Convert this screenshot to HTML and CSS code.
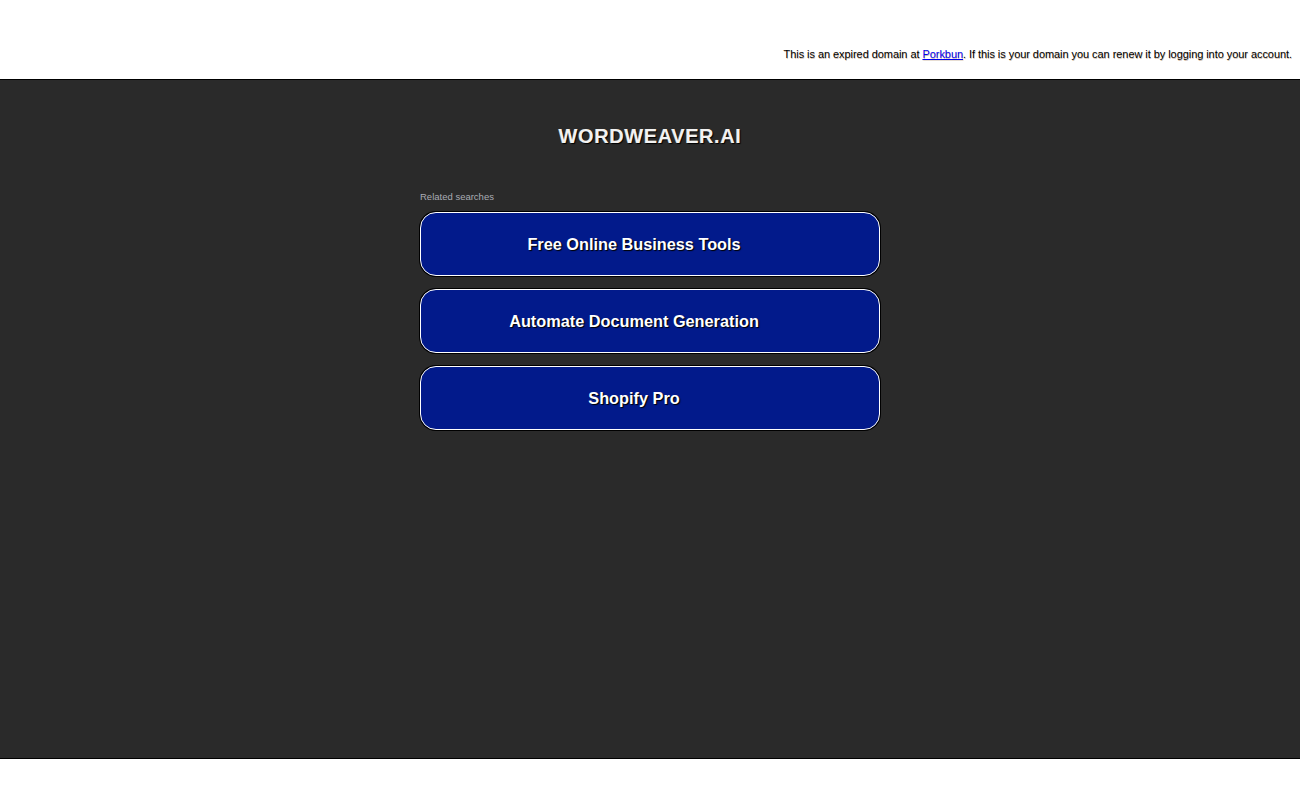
FILE: index.html
```html
<!DOCTYPE html>
<html>
<head>
<meta charset="utf-8">
<link rel="stylesheet" href="styles.css">
</head>
<body>
<div class="topbar">
  <p class="notice">This is an expired domain at <a href="#">Porkbun</a>. If this is your domain you can renew it by logging into your account.</p>
</div>
<div class="main">
  <h1 class="title">WORDWEAVER.AI</h1>
  <div class="searches">
    <p class="label">Related searches</p>
    <a class="btn" href="#">Free Online Business Tools</a>
    <a class="btn" href="#">Automate Document Generation</a>
    <a class="btn" href="#">Shopify Pro</a>
  </div>
</div>
</body>
</html>
```
FILE: styles.css
```css
html, body {
  margin: 0;
  padding: 0;
  background: #fff;
  font-family: "Liberation Sans", Arial, sans-serif;
}
.topbar {
  height: 79px;
  display: flex;
  align-items: flex-end;
  justify-content: flex-end;
  padding: 0 8px;
  box-sizing: border-box;
}
.notice {
  margin: 0 0 18px 0;
  font-size: 11px;
  letter-spacing: -0.06px;
  line-height: 13px;
  color: #000;
  text-shadow: 0.5px 0.5px 0 rgba(120, 60, 0, 0.35);
}
.notice a {
  color: #0000ee;
  text-decoration: underline;
}
.main {
  background: #2a2a2a;
  border-top: 1px solid #000;
  border-bottom: 1px solid #000;
  height: 680px;
  box-sizing: border-box;
  display: flex;
  flex-direction: column;
  align-items: center;
}
.title {
  margin: 44px 0 0 0;
  font-size: 20px;
  font-weight: bold;
  letter-spacing: 0.6px;
  color: #f2f2f2;
  text-shadow: 1px 1px 1px #000, -0.5px -0.5px 0 rgba(200, 170, 120, 0.5);
  line-height: 24px;
}
.searches {
  width: 460px;
  margin-top: 43px;
  display: flex;
  flex-direction: column;
  gap: 13px;
}
.label {
  margin: 0 0 -4px 0;
  font-size: 9.5px;
  color: #a9acb4;
  line-height: 12px;
}
.btn {
  display: flex;
  align-items: center;
  justify-content: center;
  height: 64px;
  box-sizing: border-box;
  background: #021a8b;
  border: 1px solid #fff;
  border-radius: 16px;
  box-shadow: 0 0 0 1px #000;
  color: #fff;
  font-size: 16.3px;
  font-weight: bold;
  text-decoration: none;
  padding-right: 32px;
  text-shadow: 1px 1px 1px #000;
}
```
